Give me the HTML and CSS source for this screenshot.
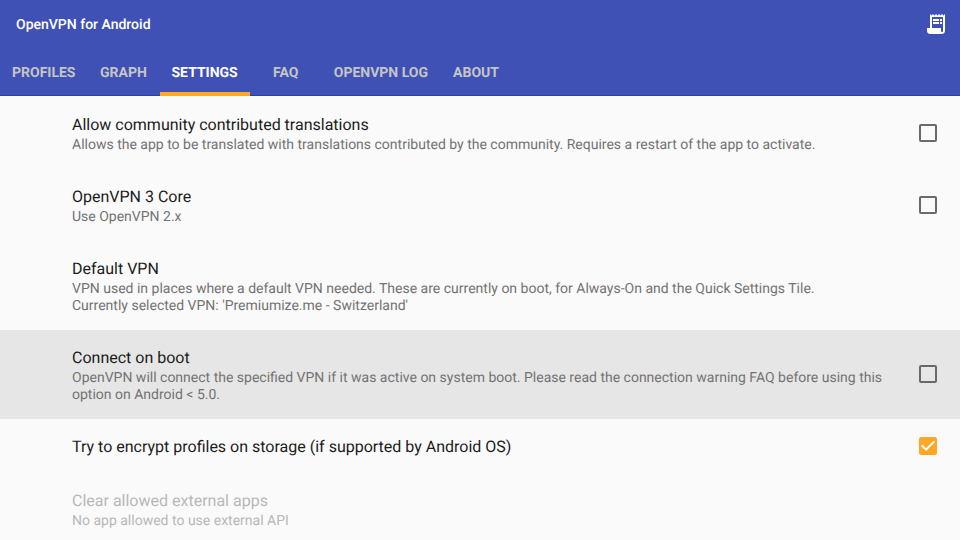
FILE: index.html
```html
<!DOCTYPE html>
<html lang="en">
<head>
<meta charset="utf-8">
<meta name="viewport" content="width=device-width, initial-scale=1">
<title>OpenVPN for Android</title>
<link rel="stylesheet" href="styles.css">
</head>
<body>
<header class="app-bar">
  <div class="title-row">
    <h1 class="app-title">OpenVPN for Android</h1>
    <button class="log-button" type="button" aria-label="Show log">
      <svg class="log-icon" viewBox="0 0 24 24" aria-hidden="true"><path d="M19.5 3.5L18 2l-1.500 1.500L15 2l-1.500 1.500L12 2l-1.500 1.500L9 2 7.500 3.500 6 2v14H3v3c0 1.660 1.340 3 3 3h12c1.660 0 3-1.340 3-3V2zM19 19c0 .55-.45 1-1 1s-1-.45-1-1v-3H8V5h11zM9 7h6v2H9zM16 7h2v2h-2zM9 10h6v2H9zM16 10h2v2h-2z"/></svg>
    </button>
  </div>
  <nav class="tabs">
    <a class="tab" href="#profiles">PROFILES</a>
    <a class="tab" href="#graph">GRAPH</a>
    <a class="tab tab-active" href="#settings" aria-current="page">SETTINGS</a>
    <a class="tab" href="#faq">FAQ</a>
    <a class="tab" href="#log">OPENVPN LOG</a>
    <a class="tab" href="#about">ABOUT</a>
  </nav>
</header>
<main class="settings">
  <label class="row">
    <span class="text"><span class="name">Allow community contributed translations</span><span class="summary">Allows the app to be translated with translations contributed by the community. Requires a restart of the app to activate.</span></span>
    <input class="check" type="checkbox">
  </label>
  <label class="row">
    <span class="text"><span class="name">OpenVPN 3 Core</span><span class="summary">Use OpenVPN 2.x</span></span>
    <input class="check" type="checkbox">
  </label>
  <button class="row" type="button">
    <span class="text"><span class="name">Default VPN</span><span class="summary">VPN used in places where a default VPN needed. These are currently on boot, for Always-On and the Quick Settings Tile.<br>Currently selected VPN: 'Premiumize.me - Switzerland'</span></span>
  </button>
  <label class="row row-focused">
    <span class="text"><span class="name">Connect on boot</span><span class="summary">OpenVPN will connect the specified VPN if it was active on system boot. Please read the connection warning FAQ before using this option on Android &lt; 5.0.</span></span>
    <input class="check" type="checkbox">
  </label>
  <label class="row row-single">
    <span class="text"><span class="name">Try to encrypt profiles on storage (if supported by Android OS)</span></span>
    <input class="check" type="checkbox" checked>
  </label>
  <button class="row" type="button" disabled>
    <span class="text"><span class="name">Clear allowed external apps</span><span class="summary">No app allowed to use external API</span></span>
  </button>
</main>
</body>
</html>
```

FILE: styles.css
```css
* { box-sizing: border-box; }
body {
  margin: 0;
  background: #fafafa;
  color: #1c1c1c;
  font-family: Roboto, "Liberation Sans", sans-serif;
  text-rendering: geometricPrecision;
}
.app-bar {
  background: #3f51b5;
  box-shadow: inset 0 -1px #303f9f;
  color: #fff;
}
.title-row {
  display: flex;
  align-items: center;
  justify-content: space-between;
  height: 48px;
  padding: 0 12px 0 16px;
}
.app-title {
  margin: 0;
  font-size: 14px;
  font-weight: 500;
  line-height: 18px;
  padding-top: 2px;
}
.log-button {
  display: flex;
  padding: 0;
  border: 0;
  background: none;
}
.log-icon {
  width: 24px;
  height: 24px;
  fill: #fff;
}
.tabs { display: flex; }
.tab {
  display: flex;
  align-items: center;
  justify-content: center;
  min-width: 72px;
  height: 48px;
  padding: 6px 12px 0;
  border-bottom: 4px solid transparent;
  color: #c5c5c5;
  font-size: 14px;
  font-weight: 700;
  text-decoration: none;
}
.tab-active {
  border-bottom-color: #ffa726;
  color: #fff;
}
.settings { padding-top: 1px; }
.row {
  display: flex;
  align-items: center;
  gap: 32px;
  width: 100%;
  padding: 16px 23px 15px 72px;
  border: 0;
  background: none;
  color: inherit;
  font: inherit;
  text-align: left;
  text-rendering: inherit;
}
.row-single { padding-bottom: 14px; }
.row-focused { background: #e6e6e6; }
.text { flex: 1; }
.name, .summary { display: block; }
.name {
  font-size: 16px;
  line-height: 24px;
}
.summary {
  color: #737373;
  font-size: 14px;
  line-height: 17px;
}
.row:disabled .name, .row:disabled .summary { color: #b8b8b8; }
.check {
  appearance: none;
  flex: none;
  width: 18px;
  height: 18px;
  margin: 0 0 2px;
  border: 2px solid #696969;
  border-radius: 2px;
}
.check:checked {
  border-color: #ffa726;
  background: #ffa726;
}
.check:checked::before {
  content: "";
  display: block;
  height: 14px;
  background: #fff;
  clip-path: polygon(0 50%, 10% 40%, 36% 66%, 90% 12%, 100% 22%, 36% 86%);
}
```
